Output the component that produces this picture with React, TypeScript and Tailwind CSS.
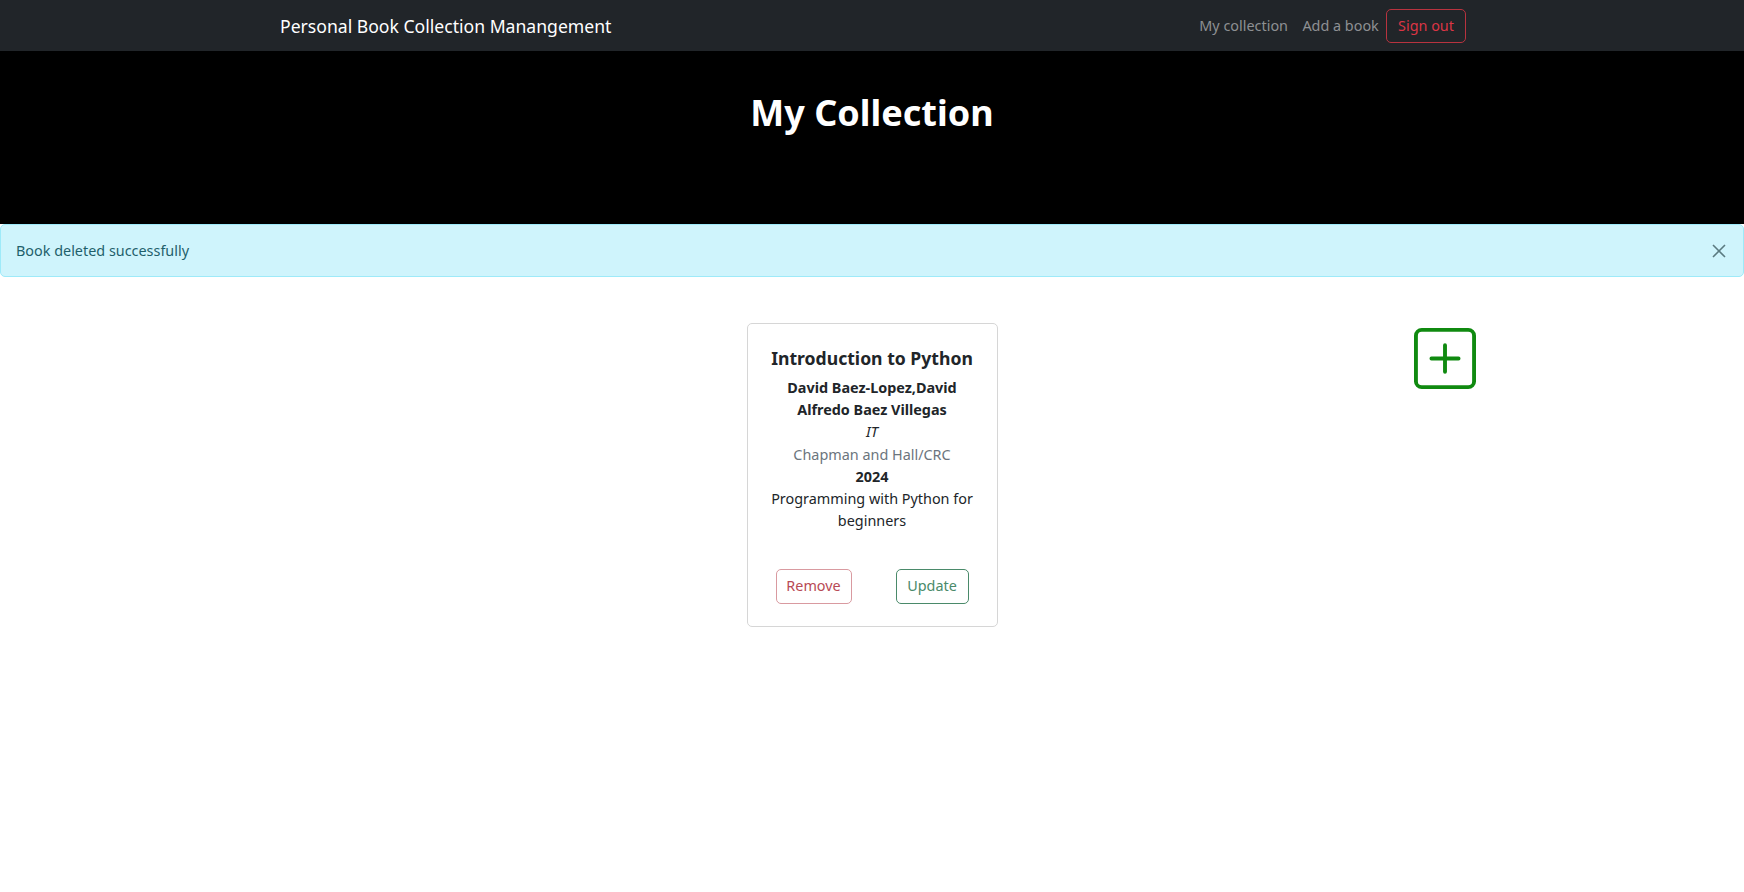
import { useState } from 'react';

const book = {
  title: 'Introduction to Python',
  authors: 'David Baez-Lopez,David Alfredo Baez Villegas',
  genre: 'IT',
  publisher: 'Chapman and Hall/CRC',
  year: 2024,
  description: 'Programming with Python for beginners',
};

function PlusSquare() {
  return (
    <svg width="62" height="61" viewBox="0 0 16 16" fill="#108a10" preserveAspectRatio="none">
      <path d="M14 1a1 1 0 0 1 1 1v12a1 1 0 0 1-1 1H2a1 1 0 0 1-1-1V2a1 1 0 0 1 1-1zM2 0a2 2 0 0 0-2 2v12a2 2 0 0 0 2 2h12a2 2 0 0 0 2-2V2a2 2 0 0 0-2-2z" />
      <path d="M8 4a.5.5 0 0 1 .5.5v3h3a.5.5 0 0 1 0 1h-3v3a.5.5 0 0 1-1 0v-3h-3a.5.5 0 0 1 0-1h3v-3A.5.5 0 0 1 8 4" />
    </svg>
  );
}

export default function App() {
  const [showAlert, setShowAlert] = useState(true);

  return (
    <div className="min-h-screen bg-white text-[#212529] font-['Noto_Sans',sans-serif]">
      {/* navbar */}
      <nav className="bg-[#212529] h-[51px]">
        <div className="max-w-[1188px] mx-auto h-full flex items-center justify-between">
          <a className="text-white text-[17.6px] leading-none pt-[3px] pl-[2px]">Personal Book Collection Manangement</a>
          <div className="flex items-center text-[14.4px] pt-[1px]">
            <a className="px-[7.2px] text-[#8e9093]">My collection</a>
            <a className="px-[7.2px] text-[#8e9093]">Add a book</a>
            <button className="h-[34px] w-[80px] border border-[#b8333f] rounded-[5px] text-[#dc3545]">Sign out</button>
          </div>
        </div>
      </nav>

      {/* hero */}
      <header className="bg-black h-[173px] pt-[40px]">
        <h1 className="text-center text-white text-[36px] font-bold leading-[43px]">My Collection</h1>
      </header>

      {/* alert */}
      {showAlert && (
        <div className="flex items-center justify-between h-[53px] bg-[#cff4fc] border border-[#9eeaf9] rounded-[5px] text-[#1f5f6b] text-[14.4px] pl-[15px] pr-[16px]">
          <span>Book deleted successfully</span>
          <button onClick={() => setShowAlert(false)} className="text-[#5b7a80]">
            <svg width="16" height="16" viewBox="0 0 16 16" stroke="currentColor" strokeWidth="1.6" fill="none">
              <path d="M2 2l12 12M14 2L2 14" />
            </svg>
          </button>
        </div>
      )}

      {/* books */}
      <main className="grid grid-cols-[1fr_auto_1fr] mt-[46px]">
        <div />
        <div className="w-[251px] h-[304px] border border-[#d6d6d6] rounded-[5px] flex flex-col text-center text-[14.4px] leading-[22.2px] pt-[22px] px-[14px] pb-[22px]">
          <h5 className="text-[17.6px] font-bold leading-[22px] mb-[8px] pt-[1px]">{book.title}</h5>
          <p className="font-bold">{book.authors}</p>
          <p className="italic">{book.genre}</p>
          <p className="text-[#6c757d]">{book.publisher}</p>
          <p className="font-bold">{book.year}</p>
          <p>{book.description}</p>
          <div className="mt-auto flex justify-between px-[14px]">
            <button className="h-[35px] w-[76px] border border-[#d99aa0] rounded-[5px] text-[#b84a55]">Remove</button>
            <button className="h-[35px] w-[73px] border border-[#4a8a6a] rounded-[5px] text-[#4a8a6a]">Update</button>
          </div>
        </div>
        <div className="pl-[416px] pt-[5px]">
          <PlusSquare />
        </div>
      </main>
    </div>
  );
}
